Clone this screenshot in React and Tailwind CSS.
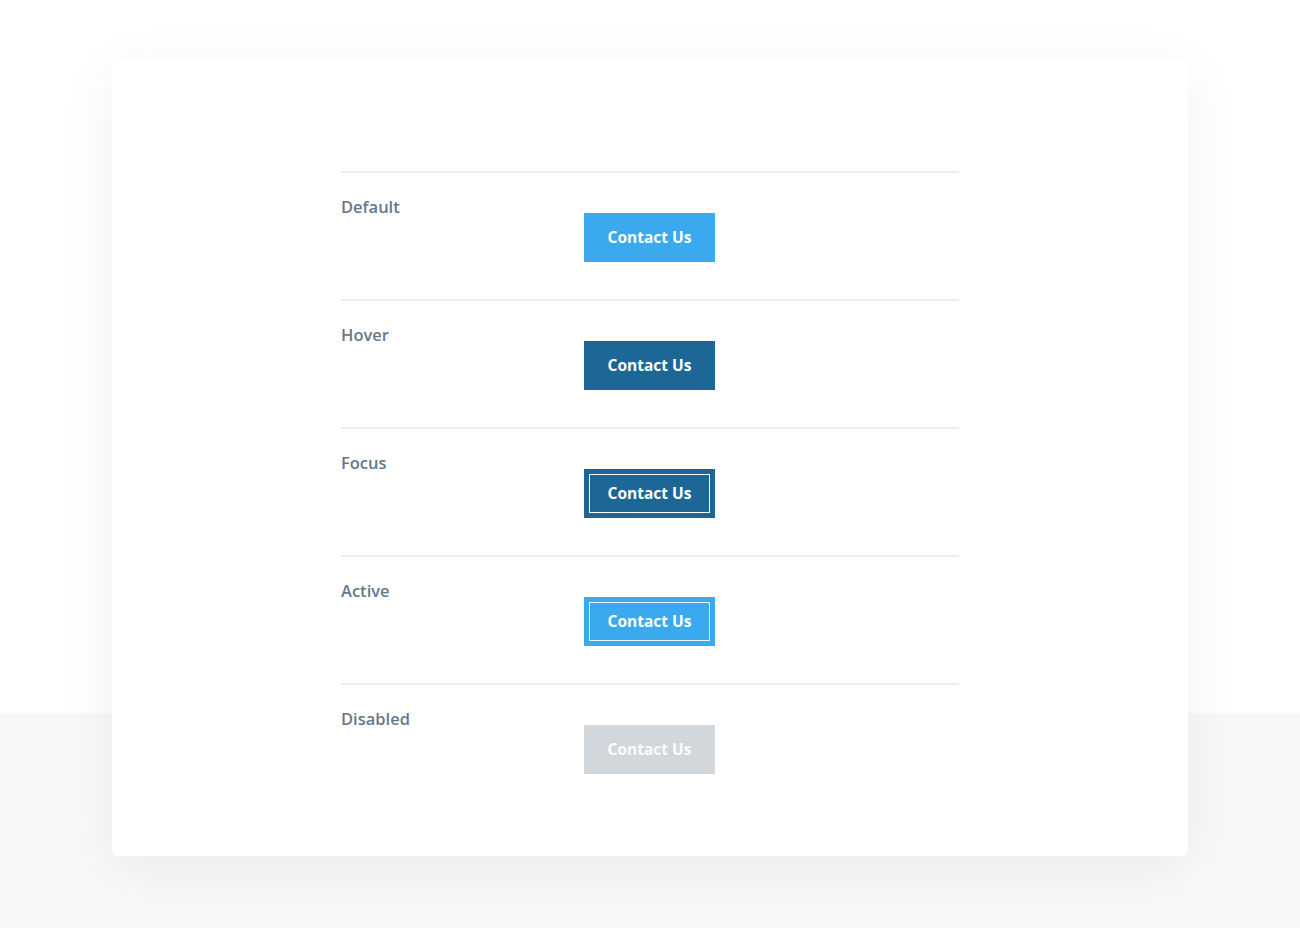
import React from "react";

const states = [
  { label: "Default", className: "bg-[#3aa9ee] text-white" },
  { label: "Hover", className: "bg-[#1c6795] text-white" },
  {
    label: "Focus",
    className: "bg-[#1c6795] text-white outline outline-1 outline-white outline-offset-[-6px]",
  },
  {
    label: "Active",
    className: "bg-[#3aa9ee] text-white outline outline-1 outline-white/90 outline-offset-[-6px]",
  },
  { label: "Disabled", className: "bg-[#d2d7db] text-white/90 cursor-not-allowed" },
];

export default function App() {
  return (
    <div
      className="min-h-[928px] pt-[60px] pb-[72px] bg-[linear-gradient(to_bottom,#ffffff_713px,#f8f8f8_713px)]"
      style={{ fontFamily: "'Open Sans', Lato, 'Liberation Sans', sans-serif" }}
    >
      <div className="w-[1076px] mx-auto bg-white rounded-md shadow-[0_12px_60px_rgba(0,0,0,0.06)] pt-[111px] pb-[45px]">
        <div className="w-[618px] mx-auto">
          {states.map((s) => (
            <div key={s.label} className="border-t-2 border-[#eceff1] flex items-start">
              {/* Label */}
              <div className="w-[243px] pt-[24px] text-[16.5px] leading-5 font-semibold text-[#65788a]">
                {s.label}
              </div>
              {/* Button */}
              <div className="pt-[40px] pb-[37px]">
                <button
                  disabled={s.label === "Disabled"}
                  className={`w-[131px] h-[49px] text-[15.5px] font-bold ${s.className}`}
                >
                  Contact Us
                </button>
              </div>
            </div>
          ))}
        </div>
      </div>
    </div>
  );
}
